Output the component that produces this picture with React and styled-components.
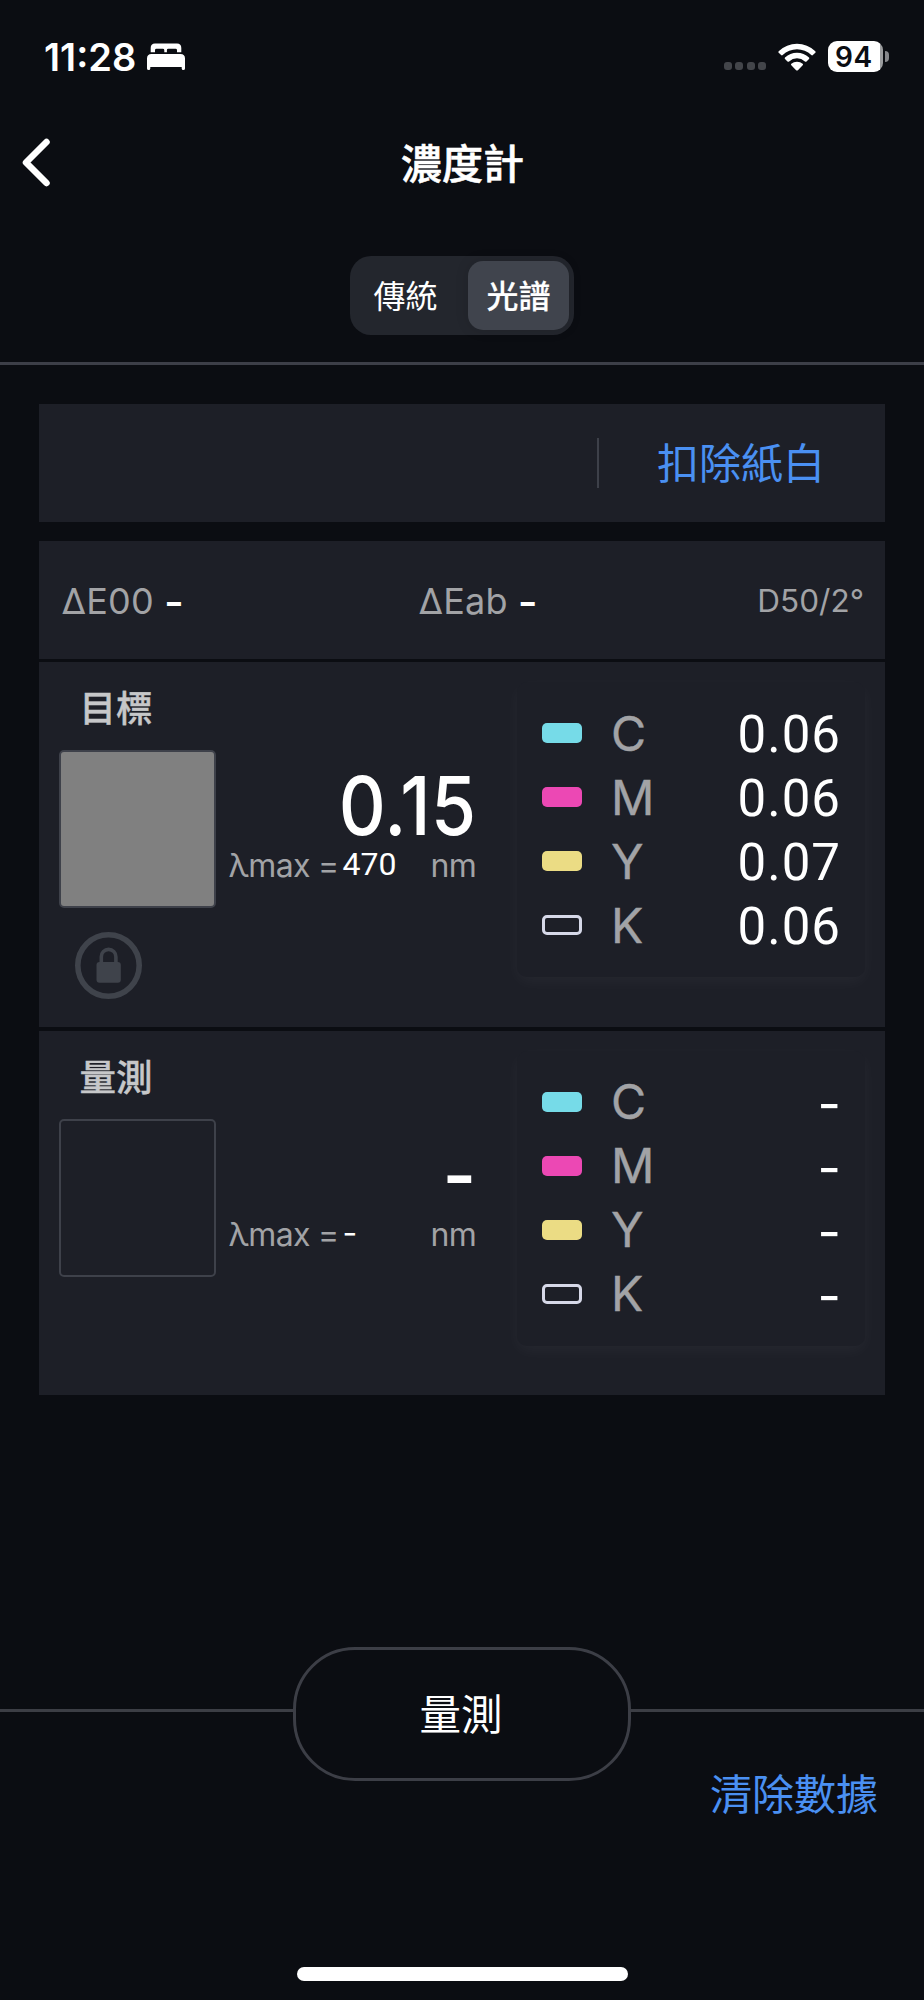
import styled, { createGlobalStyle } from "styled-components";

const GlobalStyle = createGlobalStyle`
  * {
    box-sizing: border-box;
  }
  body {
    margin: 0;
    background-color: #0b0d12;
  }
  button {
    padding: 0;
    border: none;
    background: none;
    font: inherit;
    color: inherit;
  }
`

const Screen = styled.div`
  width: 924px;
  height: 2000px;
  display: flex;
  flex-direction: column;
  overflow: hidden;
  background-color: #0b0d12;
  color: #fff;
  font-family: Inter, "Noto Sans CJK TC", sans-serif;
`

const StatusBar = styled.div`
  height: 112px;
  padding: 1px 35px 0 44px;
  display: flex;
  justify-content: space-between;
  align-items: center;
  .left,
  .right {
    display: flex;
    align-items: center;
  }
  .time {
    width: 103px;
    padding-top: 1px;
    font-size: 38px;
    font-weight: 600;
    line-height: 44px;
    white-space: nowrap;
  }
`

const SignalDots = styled.div`
  margin: 19px 12px 0 0;
  display: flex;
  gap: 3.5px;
  span {
    width: 8px;
    height: 8px;
    border-radius: 3px;
    background-color: #43454a;
  }
`

const Battery = styled.div`
  margin-left: 12px;
  display: flex;
  align-items: center;
  gap: 2px;
  .body {
    width: 55px;
    height: 31px;
    padding-right: 3px;
    border-radius: 9px;
    background: linear-gradient(to right, #fff 52px, #9b9c9e 52px);
    color: #0b0d12;
    font-size: 28px;
    font-weight: 600;
    line-height: 32px;
    letter-spacing: 0.6px;
    text-align: center;
  }
  .nub {
    width: 4px;
    height: 11px;
    border-radius: 0 4px 4px 0;
    background-color: #85868a;
  }
`

const Header = styled.header`
  height: 100px;
  padding: 0 21px;
  display: grid;
  grid-template-columns: 60px 1fr 60px;
  align-items: center;
  .back {
    width: 30px;
    height: 52px;
  }
  h1 {
    margin: 0;
    padding: 3px 0 0 1px;
    font-size: 41px;
    font-weight: 500;
    line-height: 60px;
    text-align: center;
    -webkit-text-stroke: 0.6px #fff;
  }
`

const TabBar = styled.div`
  height: 153px;
  padding-top: 44px;
  display: flex;
  justify-content: center;
  border-bottom: 3px solid #3d3f48;
`

const Segmented = styled.div`
  width: 224px;
  height: 79px;
  padding: 5px;
  display: flex;
  justify-content: space-between;
  border-radius: 21px;
  background-color: #23262d;
`

const Segment = styled.button`
  width: 101px;
  padding-top: 2px;
  border-radius: 15px;
  background-color: ${({ $active }) => ($active ? "#40444d" : "transparent")};
  box-shadow: ${({ $active }) => ($active ? "0 0 14px rgba(0, 0, 0, .12)" : "none")};
  font-size: 32px;
  font-weight: ${({ $active }) => ($active ? 500 : 400)};
  line-height: 67px;
  -webkit-text-stroke: ${({ $active }) => ($active ? "0.2px #fff" : "0")};
`

const Content = styled.main`
  padding: 39px 39px 0;
  display: flex;
  flex-direction: column;
`

const Panel = styled.section`
  width: 846px;
  height: ${({ $height }) => $height}px;
  margin-bottom: ${({ $gap }) => $gap}px;
  background-color: #1d1f27;
`

const PaperBar = styled(Panel)`
  display: flex;
  align-items: center;
  justify-content: flex-end;
  .action {
    width: 288px;
    height: 50px;
    padding: 2px 2px 0 0;
    border-left: 2px solid #3d4049;
    color: #4a90f2;
    font-size: 42px;
    line-height: 46px;
    text-align: center;
  }
`

const DeltaBar = styled(Panel)`
  padding: 2px 21px 0 22.5px;
  display: grid;
  grid-template-columns: 357px 1fr auto;
  align-items: center;
  color: #a2a3a6;
  line-height: 46px;
  .delta {
    display: flex;
    gap: 10px;
    font-size: 36px;
    letter-spacing: 0.2px;
  }
  .delta b {
    color: #fff;
    font-size: 43px;
    font-weight: 500;
  }
  .light {
    font-size: 31.5px;
  }
`

const Reading = styled(Panel)`
  padding: 20px 20px 0 20px;
  display: flex;
  justify-content: space-between;
`

const Sample = styled.div`
  width: 418px;
  h2 {
    margin: 0;
    padding: 1px 0 0 20.5px;
    height: 68px;
    color: #c6c7c9;
    font-size: 36.5px;
    font-weight: 500;
    line-height: 52px;
    -webkit-text-stroke: 0.4px #c6c7c9;
  }
  .body {
    display: flex;
    gap: 12.5px;
  }
`

const Swatch = styled.div`
  width: 157px;
  height: 158px;
  flex: none;
  border: 2px solid #3e414a;
  border-radius: 5px;
  background-color: ${({ $color }) => $color};
`

const Density = styled.div`
  flex: 1;
  min-width: 0;
  .value {
    height: 96px;
    padding: 17px 1px 0 0;
    font-size: 81px;
    font-weight: 550;
    line-height: 79px;
    letter-spacing: 0.5px;
    text-align: right;
    transform: scaleX(.9);
    transform-origin: right;
  }
  .wavelength {
    display: flex;
    align-items: baseline;
    color: #a2a3a6;
    font-size: 32px;
    line-height: 40px;
    letter-spacing: -0.7px;
    white-space: nowrap;
  }
  .unit {
    margin-left: auto;
    padding-right: 1px;
  }
`

const Wavelength = styled.span`
  padding-left: 4px;
  position: relative;
  top: -2px;
  color: #fff;
  font-family: ${({ $empty }) => ($empty ? "Inter" : "Roboto")}, sans-serif;
  letter-spacing: 0;
`

const LockButton = styled.button`
  width: 67px;
  height: 67px;
  margin: 24px 0 0 16px;
  display: block;
`

const InkCard = styled.div`
  width: 348px;
  height: 295px;
  padding: 19px 28px 0 25px;
  border-radius: 10px;
  background-color: #1d1f27;
  box-shadow: 0 5px 16px rgba(255, 255, 255, .04);
`

const InkRow = styled.div`
  height: 64px;
  display: flex;
  align-items: center;
  .name {
    width: 60px;
    margin-left: 29px;
    padding-top: 1px;
    color: #a2a3a6;
    font-size: 48px;
    line-height: 62px;
    -webkit-text-stroke: 0.4px #a2a3a6;
  }
`

const Amount = styled.span`
  flex: 1;
  margin-right: -4px;
  padding-top: 4px;
  font-family: ${({ $empty }) => ($empty ? "Inter" : "Roboto")}, sans-serif;
  font-size: 51px;
  line-height: 60px;
  letter-spacing: ${({ $empty }) => ($empty ? 0 : 1)}px;
  text-align: right;
`

const Chip = styled.span`
  width: 40px;
  height: 20px;
  border-radius: 5px;
  border: ${({ $hollow }) => ($hollow ? 3 : 0)}px solid ${({ $color }) => $color};
  background-color: ${({ $hollow, $color }) => ($hollow ? "transparent" : $color)};
`

const Footer = styled.footer`
  margin-top: auto;
  height: 353px;
  display: flex;
  flex-direction: column;
  align-items: center;
  .measure-row {
    width: 100%;
    height: 134px;
    display: flex;
    justify-content: center;
  }
  .rule {
    flex: 1;
    height: 3px;
    margin-top: 61.5px;
    background-color: #3c3e45;
  }
  .measure {
    width: 338px;
    padding: 1px 2px 0 0;
    border: 3px solid #3c3e46;
    border-radius: 62px;
    font-size: 41.5px;
    line-height: 126px;
  }
  .clear {
    margin-top: -16px;
    padding-right: 46px;
    align-self: flex-end;
    color: #4a90f2;
    font-size: 42px;
    line-height: 60px;
  }
  .home {
    width: 331px;
    height: 14px;
    margin: auto 0 19px;
    border-radius: 7px;
    background-color: #fff;
  }
`

const inks = [
  { name: "C", color: "#76dbe8" },
  { name: "M", color: "#ec48b4" },
  { name: "Y", color: "#ebdc84" },
  { name: "K", color: "#d6d8e8", hollow: true },
]

function BedIcon() {
  return (
    <svg width="38" height="28" viewBox="0 0 38 28" fill="#fff">
      <path d="M3.700 9.300V5Q3.700 .5 8 .5H30Q34.300 .5 34.300 5V9.300H30V7.200Q30 5.800 28.600 5.800H21.300Q19.900 5.800 19.900 7.200V9.300H17.300V7.200Q17.300 5.800 15.900 5.800H9.400Q8 5.800 8 7.200V9.300Z" />
      <path d="M0 15.500Q0 11 4.500 11H33.500Q38 11 38 15.500V25.500Q38 27 36.300 27Q34.700 27 34.700 25.500V24H3.300V25.500Q3.300 27 1.700 27Q0 27 0 25.500Z" />
    </svg>
  )
}

function WifiIcon() {
  return (
    <svg width="38" height="28" viewBox="0 0 38 28" fill="#fff">
      <path d="M.7 8.200A26.500 26.500 0 0 1 37.300 8.200Q38 9 37.300 9.800L34.900 12.100Q34.100 12.800 33.300 12.100A20.500 20.500 0 0 0 4.700 12.100Q3.900 12.800 3.100 12.100L.7 9.800Q0 9 .7 8.200Z" />
      <path d="M7 14.500A17.500 17.500 0 0 1 31 14.500Q31.700 15.300 31 16L28.500 18.400Q27.700 19.100 26.900 18.400A11.700 11.700 0 0 0 11.100 18.400Q10.300 19.100 9.500 18.400L7 16Q6.300 15.300 7 14.500Z" />
      <path d="M13.300 20.800A8.600 8.600 0 0 1 24.700 20.800Q25.400 21.600 24.700 22.300L19.900 27.200Q19 28 18.100 27.200L13.300 22.300Q12.600 21.600 13.300 20.800Z" />
    </svg>
  )
}

function LockIcon() {
  return (
    <svg width="67" height="67" viewBox="0 0 67 67" fill="none" stroke="#3f434b">
      <circle cx="33.500" cy="33.500" r="30.700" strokeWidth="5.600" />
      <path d="M26.300 32V24.700A7.300 7.300 0 0 1 40.900 24.700V32" strokeWidth="3.600" />
      <rect x="21.500" y="30" width="24.300" height="20.700" rx="3" fill="#3f434b" stroke="none" />
    </svg>
  )
}

function ReadingPanel({ title, color, value, wavelength, amounts, gap, lock }) {
  return (
    <Reading $height={364.5} $gap={gap}>
      <Sample>
        <h2>{title}</h2>
        <div className="body">
          <Swatch $color={color} />
          <Density>
            <div className="value">{value}</div>
            <div className="wavelength">
              <span>λmax =</span>
              <Wavelength $empty={wavelength === "-"}>{wavelength}</Wavelength>
              <span className="unit">nm</span>
            </div>
          </Density>
        </div>
        {lock && (
          <LockButton>
            <LockIcon />
          </LockButton>
        )}
      </Sample>
      <InkCard>
        {inks.map((ink, index) => (
          <InkRow key={ink.name}>
            <Chip $color={ink.color} $hollow={ink.hollow} />
            <span className="name">{ink.name}</span>
            <Amount $empty={amounts[index] === "-"}>{amounts[index]}</Amount>
          </InkRow>
        ))}
      </InkCard>
    </Reading>
  )
}

function App() {
  return (
    <Screen>
      <GlobalStyle />
      <StatusBar>
        <div className="left">
          <span className="time">11:28</span>
          <BedIcon />
        </div>
        <div className="right">
          <SignalDots>
            <span />
            <span />
            <span />
            <span />
          </SignalDots>
          <WifiIcon />
          <Battery>
            <div className="body">94</div>
            <div className="nub" />
          </Battery>
        </div>
      </StatusBar>
      <Header>
        <button className="back">
          <svg width="30" height="52" viewBox="0 0 30 52" fill="none" stroke="#fff" strokeWidth="6.500" strokeLinecap="round" strokeLinejoin="round">
            <path d="M25.500 6L5 26.500L25.500 47" />
          </svg>
        </button>
        <h1>濃度計</h1>
      </Header>
      <TabBar>
        <Segmented>
          <Segment>傳統</Segment>
          <Segment $active>光譜</Segment>
        </Segmented>
      </TabBar>
      <Content>
        <PaperBar $height={118} $gap={19}>
          <button className="action">扣除紙白</button>
        </PaperBar>
        <DeltaBar $height={118} $gap={3}>
          <span className="delta">ΔE00<b>-</b></span>
          <span className="delta">ΔEab<b>-</b></span>
          <span className="light">D50/2°</span>
        </DeltaBar>
        <ReadingPanel
          title="目標"
          color="#808080"
          value="0.15"
          wavelength="470"
          amounts={["0.06", "0.06", "0.07", "0.06"]}
          gap={4}
          lock
        />
        <ReadingPanel
          title="量測"
          color="transparent"
          value="-"
          wavelength="-"
          amounts={["-", "-", "-", "-"]}
          gap={0}
        />
      </Content>
      <Footer>
        <div className="measure-row">
          <div className="rule" />
          <button className="measure">量測</button>
          <div className="rule" />
        </div>
        <button className="clear">清除數據</button>
        <div className="home" />
      </Footer>
    </Screen>
  )
}

export default App;
